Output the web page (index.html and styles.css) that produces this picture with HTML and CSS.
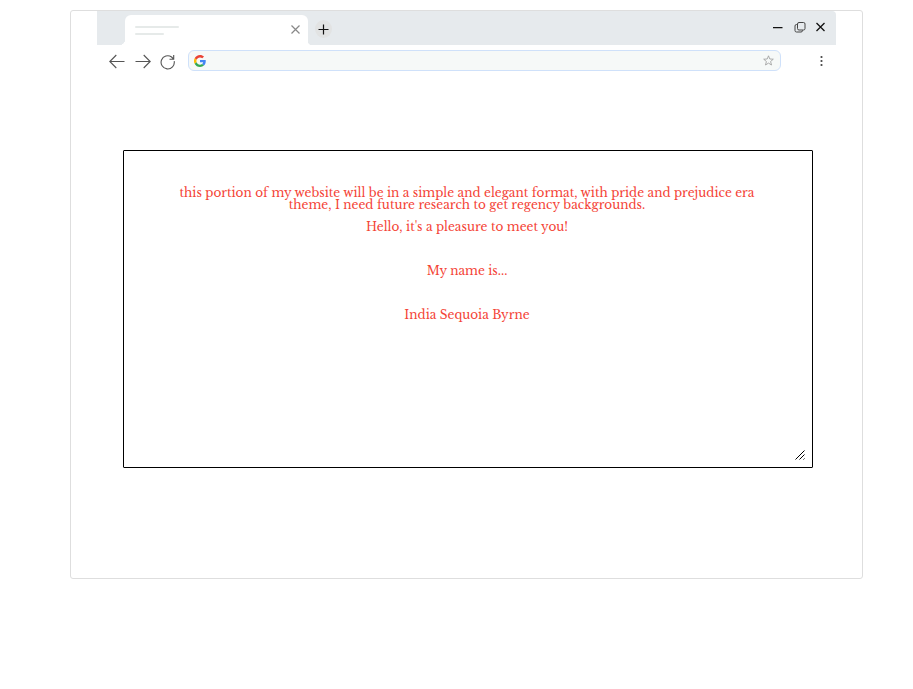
FILE: index.html
```html
<!DOCTYPE html>
<html lang="en">
<head>
<meta charset="utf-8">
<title>India Sequoia Byrne</title>
<link rel="stylesheet" href="styles.css">
</head>
<body>
<main class="window">
  <header class="browser">
    <div class="tab-strip">
      <div class="strip-start"></div>
      <div class="tab">
        <div class="tab-title"><i class="line"></i><i class="line short"></i></div>
        <svg class="tab-close" width="9" height="9" viewBox="0 0 9 9"><path d="M.5.5l8 8M8.5.5l-8 8"/></svg>
      </div>
      <div class="strip-end">
        <div class="new-tab"><svg width="11" height="11" viewBox="0 0 11 11"><path d="M5.5.5v10M.5 5.5h10"/></svg></div>
        <svg class="controls" width="56" height="14" viewBox="0 0 56 14">
          <path class="strong" d="M1 7.700h9.500M44.500 3l8 8M52.500 3l-8 8"/>
          <rect x="25.500" y="2.500" width="7.500" height="7.500" rx="1.500"/>
          <path d="M25.300 4.500h-.8a1.500 1.500 0 0 0-1.500 1.500v4.500a1.500 1.500 0 0 0 1.500 1.500h4.500a1.500 1.500 0 0 0 1.500-1.500v-.3"/>
        </svg>
      </div>
    </div>
    <nav class="toolbar">
      <svg class="nav-icon" width="16" height="16" viewBox="0 0 16 16"><path d="M15.500 7.500H1M7.300 1L.8 7.500l6.500 6.500"/></svg>
      <svg class="nav-icon forward" width="16" height="16" viewBox="0 0 16 16"><path d="M.5 7.500H15M8.700 1l6.500 6.500L8.700 14"/></svg>
      <svg class="nav-icon reload" width="16" height="16" viewBox="0 0 16 16"><path d="M14.200 7.200A6.600 6.600 0 1 1 11.600 3L13.500 5M13.700 1v4.200H9.500"/></svg>
      <div class="address">
        <svg width="12" height="12" viewBox="0 0 48 48">
          <path fill="#ea4335" d="M24 9.500c3.500 0 6.700 1.200 9.200 3.600l6.900-6.900C35.900 2.400 30.500 0 24 0 14.600 0 6.500 5.400 2.600 13.200l8 6.200C12.400 13.700 17.700 9.500 24 9.500z"/>
          <path fill="#4285f4" d="M47 24.600c0-1.600-.2-3.100-.4-4.600H24v9h12.900c-.6 3-2.200 5.500-4.700 7.200l7.700 6C44.400 38 47 32 47 24.600z"/>
          <path fill="#fbbc05" d="M10.500 28.600A14.500 14.500 0 0 1 10.500 19.400l-8-6.200A24 24 0 0 0 2.600 34.800z"/>
          <path fill="#34a853" d="M24 48c6.500 0 11.900-2.100 15.900-5.800l-7.700-6c-2.200 1.500-4.900 2.300-8.200 2.300-6.300 0-11.600-4.200-13.500-9.900l-8 6.200C6.500 42.600 14.600 48 24 48z"/>
        </svg>
        <svg class="star" width="11" height="11" viewBox="0 0 11 11"><path d="M5.500.8l1.300 3.200 3.500.2-2.700 2.300.9 3.500-3-1.900-3 1.900.9-3.500L.7 4.200 4.200 4z"/></svg>
      </div>
      <svg class="menu" width="4" height="12" viewBox="0 0 4 12"><circle cx="2.500" cy="2" r="1.100"/><circle cx="2.500" cy="6" r="1.100"/><circle cx="2.500" cy="10" r="1.100"/></svg>
    </nav>
  </header>
  <section class="panel">
    <p>this portion of my website will be in a simple and elegant format, with pride and prejudice era<br>theme, I need future research to get regency backgrounds.</p>
    <p class="hello">Hello, it's a pleasure to meet you!</p>
    <p class="spaced">My name is...</p>
    <p class="spaced">India Sequoia Byrne</p>
    <svg class="grip" width="10" height="10" viewBox="0 0 10 10"><path d="M.5 9.500l9-9M4.500 9.500l5-5M8.500 9.500l1-1"/></svg>
  </section>
</main>
</body>
</html>
```
FILE: styles.css
```css
* { box-sizing: border-box; }
body { margin: 0; padding: 10px 0 0 70px; background: #fff; }
svg { display: block; flex: none; fill: none; stroke: #555; }
.window { width: 793px; height: 569px; padding: 0 26px; border: 1px solid #dedede; border-radius: 3px; }
.browser { width: 739px; }
.tab-strip { display: flex; height: 34px; padding-top: 4px; background: #e6eaed; border-radius: 0 4px 0 0; }
.strip-start { width: 28px; background: radial-gradient(circle at 0 0, #e6eaed 6px, #fff 6.5px) right bottom / 6px 6px no-repeat; }
.tab { display: flex; align-items: center; width: 183px; padding: 0 8px 2px 10px; background: #fff; border-radius: 6px 6px 0 0; }
.tab-title { flex: 1; padding-top: 3px; }
.line { display: block; width: 44px; height: 2px; margin-bottom: 5px; border-radius: 1px; background: #e6eae9; }
.short { width: 29px; margin-bottom: 0; }
.tab-close { stroke: #888; stroke-width: 1.200; }
.strip-end { display: flex; flex: 1; justify-content: space-between; align-items: flex-start; padding: 5px 8px 0 7px; background: radial-gradient(circle at 100% 0, #e6eaed 4px, #fff 4.5px) left bottom / 4px 4px no-repeat; }
.new-tab { display: grid; place-items: center; width: 17px; height: 18px; border-radius: 50%; background: #e2e3e3; }
.new-tab svg { stroke: #111; stroke-width: 1.200; }
.controls { stroke: #444; }
.strong { stroke: #111; stroke-width: 1.300; }
.toolbar { display: flex; align-items: center; height: 31px; padding-left: 12px; }
.forward { margin-left: 10px; }
.reload { margin-left: 9px; }
.nav-icon { stroke-width: 1.100; margin-top: 2px; }
.address { display: flex; align-items: center; justify-content: space-between; width: 593px; height: 21px; margin-left: 12px; padding: 0 6px 0 5px; border: 1px solid #cfe1fa; border-radius: 6px; background: #f6f9f8; }
.address > svg:first-child { stroke: none; }
.address .star { stroke: #999; stroke-width: .8; }
.menu { margin-left: 38px; fill: #444; stroke: none; }
.panel { position: relative; width: 690px; height: 318px; margin: 74px 0 0 26px; padding-top: 36px; border: 1px solid #000; border-radius: 1px; color: #f44336; font: 12px/12px "Libre Baskerville", "Liberation Serif", serif; text-align: center; white-space: nowrap; }
.panel p { margin: 0; padding-right: 2px; }
.panel .hello { margin-top: 10px; }
.panel .spaced { margin-top: 32px; }
.grip { position: absolute; right: 7px; bottom: 7px; stroke: #000; }
```
